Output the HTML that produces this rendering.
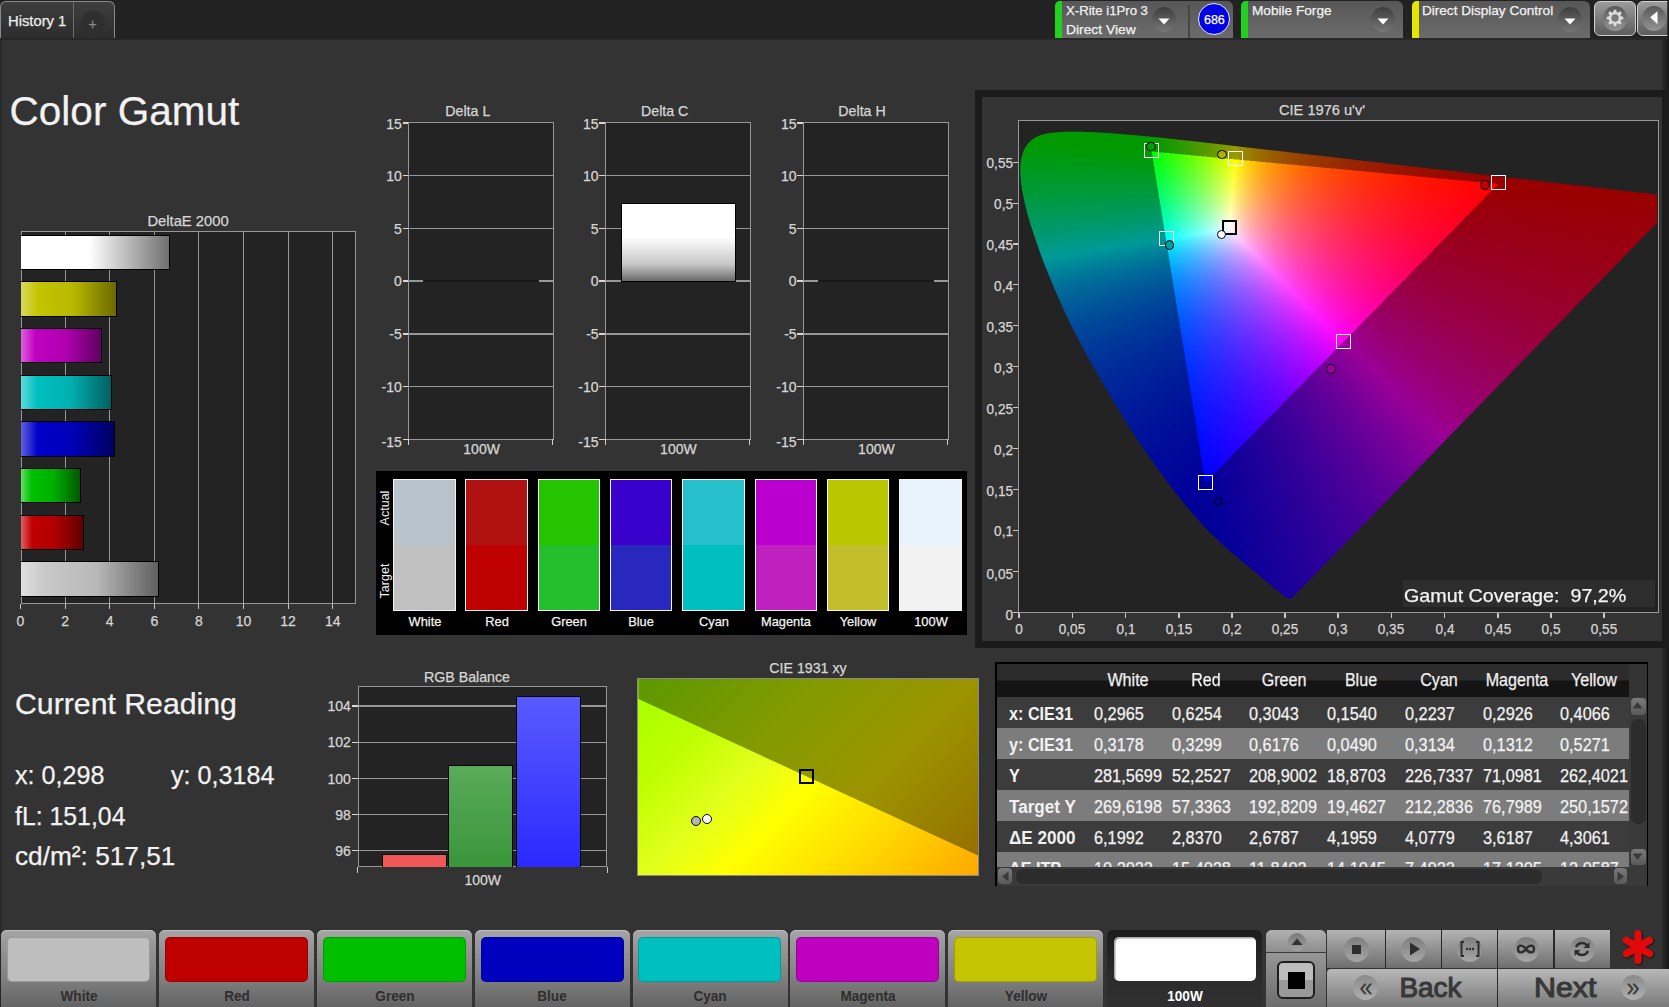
<!DOCTYPE html>
<html><head><meta charset="utf-8"><title>Color Gamut</title>
<style>
html,body{margin:0;padding:0;}
body{width:1669px;height:1007px;overflow:hidden;background:#333;position:relative;font-family:"Liberation Sans", sans-serif;}
.b{position:absolute;}
.t{position:absolute;white-space:nowrap;line-height:1;}
</style></head><body>
<div style="position:relative;left:0;top:0;width:1669px;height:1007px;overflow:hidden;background:#333;">
<div class="b" style="left:0.0px;top:0.0px;width:1669.0px;height:38.5px;background:#222;"></div>
<div class="b" style="left:0.0px;top:1.0px;width:115.0px;height:37.5px;background:linear-gradient(#3e3e3e,#2c2c2c);border:1px solid #8a8a8a;border-bottom:none;border-radius:6px 6px 0 0;box-sizing:border-box;"></div>
<div class="b" style="left:72.5px;top:1.5px;width:1.0px;height:37.0px;background:#6c6c6c;"></div>
<div class="t" style="left:7.8px;top:13.8px;font-size:14px;font-weight:normal;color:#ececec;transform:scaleX(1.055);transform-origin:0 0;-webkit-text-stroke:0.25px currentColor;">History 1</div>
<div class="b" style="left:81px;top:10.9px;width:23.5px;height:23.5px;border-radius:50%;background:radial-gradient(circle,#2e2e2e 0%,#2f2f2f 70%,#383838 100%);"></div>
<div class="t" style="left:92.7px;top:16.6px;font-size:14px;font-weight:normal;color:#8a8a8a;transform:translateX(-50%) scaleX(1.0);transform-origin:50% 0;-webkit-text-stroke:0.25px currentColor;">+</div>
<div class="b" style="left:1055.4px;top:1.0px;width:177.6px;height:37.5px;background:linear-gradient(#575757,#6c6c6c);border-radius:5px 6px 0 0;"></div>
<div class="b" style="left:1055.4px;top:1.0px;width:7.0px;height:37.5px;background:#22d022;border-radius:5px 0 0 0;"></div>
<div class="t" style="left:1066.0px;top:3.7px;font-size:13.3px;font-weight:normal;color:#f2f2f2;transform:scaleX(0.99);transform-origin:0 0;-webkit-text-stroke:0.25px currentColor;">X-Rite i1Pro 3</div>
<div class="t" style="left:1066.0px;top:22.5px;font-size:13.3px;font-weight:normal;color:#f2f2f2;transform:scaleX(1.04);transform-origin:0 0;-webkit-text-stroke:0.25px currentColor;">Direct View</div>
<div class="b" style="left:1152.4px;top:7.3px;width:24px;height:25px;border-radius:50%;background:linear-gradient(#3e3e3e,#767676);"></div>
<svg class="b" style="left:1158.4px;top:18.0px" width="12" height="8"><path d="M0.5 0.5 L11.5 0.5 L6 6.5 Z" fill="#fff"/></svg>
<div class="b" style="left:1188.0px;top:5.0px;width:1.5px;height:33.5px;background:#454545;"></div>
<div class="b" style="left:1197.6px;top:2.6px;width:30.6px;height:30.6px;border-radius:50%;background:#0000e6;border:1.6px solid #e8e8ff;"></div>
<div class="t" style="left:1214.4px;top:13.6px;font-size:12.5px;font-weight:normal;color:#fff;transform:translateX(-50%) scaleX(1.0);transform-origin:50% 0;-webkit-text-stroke:0.25px currentColor;">686</div>
<div class="b" style="left:1241.4px;top:1.0px;width:161.8px;height:37.5px;background:linear-gradient(#575757,#6c6c6c);border-radius:5px 6px 0 0;"></div>
<div class="b" style="left:1241.4px;top:1.0px;width:7.0px;height:37.5px;background:#22d022;border-radius:5px 0 0 0;"></div>
<div class="t" style="left:1252.0px;top:3.7px;font-size:13.3px;font-weight:normal;color:#f2f2f2;transform:scaleX(1.025);transform-origin:0 0;-webkit-text-stroke:0.25px currentColor;">Mobile Forge</div>
<div class="b" style="left:1371.1px;top:7.3px;width:24px;height:25px;border-radius:50%;background:linear-gradient(#3e3e3e,#767676);"></div>
<svg class="b" style="left:1377.1px;top:18.0px" width="12" height="8"><path d="M0.5 0.5 L11.5 0.5 L6 6.5 Z" fill="#fff"/></svg>
<div class="b" style="left:1411.5px;top:1.0px;width:178.3px;height:37.5px;background:linear-gradient(#575757,#6c6c6c);border-radius:5px 6px 0 0;"></div>
<div class="b" style="left:1411.5px;top:1.0px;width:7.0px;height:37.5px;background:#e6e600;border-radius:5px 0 0 0;"></div>
<div class="t" style="left:1422.0px;top:3.7px;font-size:13.3px;font-weight:normal;color:#f2f2f2;transform:scaleX(1.02);transform-origin:0 0;-webkit-text-stroke:0.25px currentColor;">Direct Display Control</div>
<div class="b" style="left:1558.3px;top:7.3px;width:24px;height:25px;border-radius:50%;background:linear-gradient(#3e3e3e,#767676);"></div>
<svg class="b" style="left:1564.3px;top:18.0px" width="12" height="8"><path d="M0.5 0.5 L11.5 0.5 L6 6.5 Z" fill="#fff"/></svg>
<div class="b" style="left:1594.2px;top:1.2px;width:42.0px;height:34.4px;background:linear-gradient(#9c9c9c,#5c5c5c);border:1.3px solid #d0d0d0;border-radius:6px;box-sizing:border-box;"></div>
<div class="b" style="left:1603.2px;top:6px;width:23.5px;height:25px;border-radius:50%;background:linear-gradient(#585858,#959595);"></div>
<svg class="b" style="left:1605px;top:8px" width="20" height="20" viewBox="-10 -10 20 20"><g fill="#dedede"><circle r="6.1"/><path d="M-1.9 -5.6 L-1.1 -8.3 L1.1 -8.3 L1.9 -5.6 Z" transform="rotate(0)"/><path d="M-1.9 -5.6 L-1.1 -8.3 L1.1 -8.3 L1.9 -5.6 Z" transform="rotate(45)"/><path d="M-1.9 -5.6 L-1.1 -8.3 L1.1 -8.3 L1.9 -5.6 Z" transform="rotate(90)"/><path d="M-1.9 -5.6 L-1.1 -8.3 L1.1 -8.3 L1.9 -5.6 Z" transform="rotate(135)"/><path d="M-1.9 -5.6 L-1.1 -8.3 L1.1 -8.3 L1.9 -5.6 Z" transform="rotate(180)"/><path d="M-1.9 -5.6 L-1.1 -8.3 L1.1 -8.3 L1.9 -5.6 Z" transform="rotate(225)"/><path d="M-1.9 -5.6 L-1.1 -8.3 L1.1 -8.3 L1.9 -5.6 Z" transform="rotate(270)"/><path d="M-1.9 -5.6 L-1.1 -8.3 L1.1 -8.3 L1.9 -5.6 Z" transform="rotate(315)"/></g><circle r="3.7" fill="#7a7a7a"/></svg>
<div class="b" style="left:1636.8px;top:1.2px;width:43.2px;height:34.4px;background:linear-gradient(#9c9c9c,#5c5c5c);border:1.3px solid #d0d0d0;border-radius:6px;box-sizing:border-box;"></div>
<div class="b" style="left:1642px;top:6px;width:23.5px;height:25px;border-radius:50%;background:linear-gradient(#585858,#959595);"></div>
<svg class="b" style="left:1649.5px;top:11px" width="8" height="14"><path d="M7.5 0.3 L7.5 13.2 L0.2 6.3 Z" fill="#fff"/></svg>
<div class="b" style="left:1666.5px;top:0.0px;width:2.5px;height:38.5px;background:linear-gradient(90deg,rgba(20,20,20,0.6),#141414);"></div>
<div class="b" style="left:0.0px;top:38.3px;width:1669.0px;height:1.3px;background:#272727;"></div>
<div class="b" style="left:0.0px;top:38.5px;width:1.8px;height:968.5px;background:#272727;"></div>
<div class="b" style="left:1662.0px;top:38.5px;width:7.0px;height:968.5px;background:linear-gradient(90deg,#2a2a2a,#161616);"></div>
<div class="t" style="left:9.6px;top:90.6px;font-size:40.5px;font-weight:normal;color:#f2f2f2;-webkit-text-stroke:0.25px currentColor;">Color Gamut</div>
<div class="t" style="left:188.1px;top:213.6px;font-size:14.2px;font-weight:normal;color:#d6d6d6;transform:translateX(-50%) scaleX(1.04);transform-origin:50% 0;-webkit-text-stroke:0.25px currentColor;">DeltaE 2000</div>
<div class="b" style="left:20.5px;top:230.6px;width:335.5px;height:373.2px;background:#232323;border:1.2px solid #979797;box-sizing:border-box;"></div>
<div class="b" style="left:19.9px;top:603.8px;width:1.2px;height:5.5px;background:#c8c8c8;"></div>
<div class="t" style="left:20.5px;top:613.6px;font-size:14px;font-weight:normal;color:#d6d6d6;transform:translateX(-50%) scaleX(1.0);transform-origin:50% 0;-webkit-text-stroke:0.25px currentColor;">0</div>
<div class="b" style="left:64.5px;top:230.6px;width:1.2px;height:373.2px;background:#979797;"></div>
<div class="b" style="left:64.5px;top:603.8px;width:1.2px;height:5.5px;background:#c8c8c8;"></div>
<div class="t" style="left:65.1px;top:613.6px;font-size:14px;font-weight:normal;color:#d6d6d6;transform:translateX(-50%) scaleX(1.0);transform-origin:50% 0;-webkit-text-stroke:0.25px currentColor;">2</div>
<div class="b" style="left:109.1px;top:230.6px;width:1.2px;height:373.2px;background:#979797;"></div>
<div class="b" style="left:109.1px;top:603.8px;width:1.2px;height:5.5px;background:#c8c8c8;"></div>
<div class="t" style="left:109.7px;top:613.6px;font-size:14px;font-weight:normal;color:#d6d6d6;transform:translateX(-50%) scaleX(1.0);transform-origin:50% 0;-webkit-text-stroke:0.25px currentColor;">4</div>
<div class="b" style="left:153.7px;top:230.6px;width:1.2px;height:373.2px;background:#979797;"></div>
<div class="b" style="left:153.7px;top:603.8px;width:1.2px;height:5.5px;background:#c8c8c8;"></div>
<div class="t" style="left:154.3px;top:613.6px;font-size:14px;font-weight:normal;color:#d6d6d6;transform:translateX(-50%) scaleX(1.0);transform-origin:50% 0;-webkit-text-stroke:0.25px currentColor;">6</div>
<div class="b" style="left:198.3px;top:230.6px;width:1.2px;height:373.2px;background:#979797;"></div>
<div class="b" style="left:198.3px;top:603.8px;width:1.2px;height:5.5px;background:#c8c8c8;"></div>
<div class="t" style="left:198.9px;top:613.6px;font-size:14px;font-weight:normal;color:#d6d6d6;transform:translateX(-50%) scaleX(1.0);transform-origin:50% 0;-webkit-text-stroke:0.25px currentColor;">8</div>
<div class="b" style="left:242.9px;top:230.6px;width:1.2px;height:373.2px;background:#979797;"></div>
<div class="b" style="left:242.9px;top:603.8px;width:1.2px;height:5.5px;background:#c8c8c8;"></div>
<div class="t" style="left:243.5px;top:613.6px;font-size:14px;font-weight:normal;color:#d6d6d6;transform:translateX(-50%) scaleX(1.0);transform-origin:50% 0;-webkit-text-stroke:0.25px currentColor;">10</div>
<div class="b" style="left:287.5px;top:230.6px;width:1.2px;height:373.2px;background:#979797;"></div>
<div class="b" style="left:287.5px;top:603.8px;width:1.2px;height:5.5px;background:#c8c8c8;"></div>
<div class="t" style="left:288.1px;top:613.6px;font-size:14px;font-weight:normal;color:#d6d6d6;transform:translateX(-50%) scaleX(1.0);transform-origin:50% 0;-webkit-text-stroke:0.25px currentColor;">12</div>
<div class="b" style="left:332.1px;top:230.6px;width:1.2px;height:373.2px;background:#979797;"></div>
<div class="b" style="left:332.1px;top:603.8px;width:1.2px;height:5.5px;background:#c8c8c8;"></div>
<div class="t" style="left:332.7px;top:613.6px;font-size:14px;font-weight:normal;color:#d6d6d6;transform:translateX(-50%) scaleX(1.0);transform-origin:50% 0;-webkit-text-stroke:0.25px currentColor;">14</div>
<div class="b" style="left:21.0px;top:234.5px;width:149.0px;height:35.6px;box-sizing:border-box;border:1.8px solid #000;border-left:none;background:linear-gradient(90deg,#ffffff 0%,#ffffff 18%,#ffffff 46%,#707070 100%);"></div>
<div class="b" style="left:21.0px;top:281.2px;width:96.0px;height:35.6px;box-sizing:border-box;border:1.8px solid #000;border-left:none;background:linear-gradient(90deg,#d8d860 0%,#c4c400 18%,#b8b800 55%,#6a6a00 100%);"></div>
<div class="b" style="left:21.0px;top:327.9px;width:80.7px;height:35.6px;box-sizing:border-box;border:1.8px solid #000;border-left:none;background:linear-gradient(90deg,#e060e0 0%,#c000c0 18%,#b000b0 55%,#600060 100%);"></div>
<div class="b" style="left:21.0px;top:374.6px;width:90.9px;height:35.6px;box-sizing:border-box;border:1.8px solid #000;border-left:none;background:linear-gradient(90deg,#60d8d8 0%,#00c0c0 18%,#00b0b0 55%,#006060 100%);"></div>
<div class="b" style="left:21.0px;top:421.3px;width:93.6px;height:35.6px;box-sizing:border-box;border:1.8px solid #000;border-left:none;background:linear-gradient(90deg,#6060e0 0%,#0000c8 18%,#0000b8 55%,#000060 100%);"></div>
<div class="b" style="left:21.0px;top:467.9px;width:59.7px;height:35.6px;box-sizing:border-box;border:1.8px solid #000;border-left:none;background:linear-gradient(90deg,#60e060 0%,#00c000 18%,#00b000 55%,#005800 100%);"></div>
<div class="b" style="left:21.0px;top:514.6px;width:63.3px;height:35.6px;box-sizing:border-box;border:1.8px solid #000;border-left:none;background:linear-gradient(90deg,#e06060 0%,#c00000 18%,#b00000 55%,#600000 100%);"></div>
<div class="b" style="left:21.0px;top:561.3px;width:138.2px;height:35.6px;box-sizing:border-box;border:1.8px solid #000;border-left:none;background:linear-gradient(90deg,#e0e0e0 0%,#c8c8c8 18%,#b8b8b8 55%,#606060 100%);"></div>
<div class="t" style="left:467.8px;top:104.3px;font-size:14.2px;font-weight:normal;color:#d6d6d6;transform:translateX(-50%) scaleX(1.0);transform-origin:50% 0;-webkit-text-stroke:0.25px currentColor;">Delta L</div>
<div class="b" style="left:408.1px;top:122.3px;width:145.9px;height:317.7px;background:#232323;border:1.2px solid #979797;box-sizing:border-box;"></div>
<div class="b" style="left:408.1px;top:174.9px;width:145.9px;height:1.4px;background:#979797;"></div>
<div class="b" style="left:408.1px;top:227.7px;width:145.9px;height:1.4px;background:#979797;"></div>
<div class="b" style="left:408.1px;top:280.4px;width:145.9px;height:1.4px;background:#979797;"></div>
<div class="b" style="left:408.1px;top:333.2px;width:145.9px;height:1.4px;background:#979797;"></div>
<div class="b" style="left:408.1px;top:385.9px;width:145.9px;height:1.4px;background:#979797;"></div>
<div class="b" style="left:402.6px;top:122.2px;width:5.5px;height:1.4px;background:#d8d8d8;"></div>
<div class="t" style="left:401.8px;top:116.8px;font-size:14px;font-weight:normal;color:#d6d6d6;transform:translateX(-100%) scaleX(1.0);transform-origin:100% 0;-webkit-text-stroke:0.25px currentColor;">15</div>
<div class="b" style="left:402.6px;top:174.9px;width:5.5px;height:1.4px;background:#d8d8d8;"></div>
<div class="t" style="left:401.8px;top:168.9px;font-size:14px;font-weight:normal;color:#d6d6d6;transform:translateX(-100%) scaleX(1.0);transform-origin:100% 0;-webkit-text-stroke:0.25px currentColor;">10</div>
<div class="b" style="left:402.6px;top:227.7px;width:5.5px;height:1.4px;background:#d8d8d8;"></div>
<div class="t" style="left:401.8px;top:221.7px;font-size:14px;font-weight:normal;color:#d6d6d6;transform:translateX(-100%) scaleX(1.0);transform-origin:100% 0;-webkit-text-stroke:0.25px currentColor;">5</div>
<div class="b" style="left:402.6px;top:280.4px;width:5.5px;height:1.4px;background:#d8d8d8;"></div>
<div class="t" style="left:401.8px;top:274.4px;font-size:14px;font-weight:normal;color:#d6d6d6;transform:translateX(-100%) scaleX(1.0);transform-origin:100% 0;-webkit-text-stroke:0.25px currentColor;">0</div>
<div class="b" style="left:402.6px;top:333.2px;width:5.5px;height:1.4px;background:#d8d8d8;"></div>
<div class="t" style="left:401.8px;top:327.2px;font-size:14px;font-weight:normal;color:#d6d6d6;transform:translateX(-100%) scaleX(1.0);transform-origin:100% 0;-webkit-text-stroke:0.25px currentColor;">-5</div>
<div class="b" style="left:402.6px;top:385.9px;width:5.5px;height:1.4px;background:#d8d8d8;"></div>
<div class="t" style="left:401.8px;top:379.9px;font-size:14px;font-weight:normal;color:#d6d6d6;transform:translateX(-100%) scaleX(1.0);transform-origin:100% 0;-webkit-text-stroke:0.25px currentColor;">-10</div>
<div class="b" style="left:402.6px;top:438.7px;width:5.5px;height:1.4px;background:#d8d8d8;"></div>
<div class="t" style="left:401.8px;top:434.7px;font-size:14px;font-weight:normal;color:#d6d6d6;transform:translateX(-100%) scaleX(1.0);transform-origin:100% 0;-webkit-text-stroke:0.25px currentColor;">-15</div>
<div class="b" style="left:408.2px;top:439.4px;width:1.2px;height:6.0px;background:#d0d0d0;"></div>
<div class="b" style="left:552.1px;top:439.4px;width:1.2px;height:6.0px;background:#d0d0d0;"></div>
<div class="t" style="left:481.6px;top:442.1px;font-size:14px;font-weight:normal;color:#d6d6d6;transform:translateX(-50%) scaleX(1.0);transform-origin:50% 0;-webkit-text-stroke:0.25px currentColor;">100W</div>
<div class="b" style="left:423.1px;top:280.2px;width:115.9px;height:1.6px;background:#1a1a1a;"></div>
<div class="t" style="left:664.7px;top:104.3px;font-size:14.2px;font-weight:normal;color:#d6d6d6;transform:translateX(-50%) scaleX(1.0);transform-origin:50% 0;-webkit-text-stroke:0.25px currentColor;">Delta C</div>
<div class="b" style="left:604.9px;top:122.3px;width:146.0px;height:317.7px;background:#232323;border:1.2px solid #979797;box-sizing:border-box;"></div>
<div class="b" style="left:604.9px;top:174.9px;width:146.0px;height:1.4px;background:#979797;"></div>
<div class="b" style="left:604.9px;top:227.7px;width:146.0px;height:1.4px;background:#979797;"></div>
<div class="b" style="left:604.9px;top:280.4px;width:146.0px;height:1.4px;background:#979797;"></div>
<div class="b" style="left:604.9px;top:333.2px;width:146.0px;height:1.4px;background:#979797;"></div>
<div class="b" style="left:604.9px;top:385.9px;width:146.0px;height:1.4px;background:#979797;"></div>
<div class="b" style="left:599.4px;top:122.2px;width:5.5px;height:1.4px;background:#d8d8d8;"></div>
<div class="t" style="left:598.6px;top:116.8px;font-size:14px;font-weight:normal;color:#d6d6d6;transform:translateX(-100%) scaleX(1.0);transform-origin:100% 0;-webkit-text-stroke:0.25px currentColor;">15</div>
<div class="b" style="left:599.4px;top:174.9px;width:5.5px;height:1.4px;background:#d8d8d8;"></div>
<div class="t" style="left:598.6px;top:168.9px;font-size:14px;font-weight:normal;color:#d6d6d6;transform:translateX(-100%) scaleX(1.0);transform-origin:100% 0;-webkit-text-stroke:0.25px currentColor;">10</div>
<div class="b" style="left:599.4px;top:227.7px;width:5.5px;height:1.4px;background:#d8d8d8;"></div>
<div class="t" style="left:598.6px;top:221.7px;font-size:14px;font-weight:normal;color:#d6d6d6;transform:translateX(-100%) scaleX(1.0);transform-origin:100% 0;-webkit-text-stroke:0.25px currentColor;">5</div>
<div class="b" style="left:599.4px;top:280.4px;width:5.5px;height:1.4px;background:#d8d8d8;"></div>
<div class="t" style="left:598.6px;top:274.4px;font-size:14px;font-weight:normal;color:#d6d6d6;transform:translateX(-100%) scaleX(1.0);transform-origin:100% 0;-webkit-text-stroke:0.25px currentColor;">0</div>
<div class="b" style="left:599.4px;top:333.2px;width:5.5px;height:1.4px;background:#d8d8d8;"></div>
<div class="t" style="left:598.6px;top:327.2px;font-size:14px;font-weight:normal;color:#d6d6d6;transform:translateX(-100%) scaleX(1.0);transform-origin:100% 0;-webkit-text-stroke:0.25px currentColor;">-5</div>
<div class="b" style="left:599.4px;top:385.9px;width:5.5px;height:1.4px;background:#d8d8d8;"></div>
<div class="t" style="left:598.6px;top:379.9px;font-size:14px;font-weight:normal;color:#d6d6d6;transform:translateX(-100%) scaleX(1.0);transform-origin:100% 0;-webkit-text-stroke:0.25px currentColor;">-10</div>
<div class="b" style="left:599.4px;top:438.7px;width:5.5px;height:1.4px;background:#d8d8d8;"></div>
<div class="t" style="left:598.6px;top:434.7px;font-size:14px;font-weight:normal;color:#d6d6d6;transform:translateX(-100%) scaleX(1.0);transform-origin:100% 0;-webkit-text-stroke:0.25px currentColor;">-15</div>
<div class="b" style="left:605.0px;top:439.4px;width:1.2px;height:6.0px;background:#d0d0d0;"></div>
<div class="b" style="left:749.0px;top:439.4px;width:1.2px;height:6.0px;background:#d0d0d0;"></div>
<div class="t" style="left:678.4px;top:442.1px;font-size:14px;font-weight:normal;color:#d6d6d6;transform:translateX(-50%) scaleX(1.0);transform-origin:50% 0;-webkit-text-stroke:0.25px currentColor;">100W</div>
<div class="b" style="left:620.9px;top:202.5px;width:115px;height:79.5px;box-sizing:border-box;border:1.8px solid #000;background:linear-gradient(#ffffff 0%,#ffffff 42%,#c8c8c8 78%,#6a6a6a 100%);"></div>
<div class="t" style="left:862.0px;top:104.3px;font-size:14.2px;font-weight:normal;color:#d6d6d6;transform:translateX(-50%) scaleX(1.0);transform-origin:50% 0;-webkit-text-stroke:0.25px currentColor;">Delta H</div>
<div class="b" style="left:802.9px;top:122.3px;width:146.0px;height:317.7px;background:#232323;border:1.2px solid #979797;box-sizing:border-box;"></div>
<div class="b" style="left:802.9px;top:174.9px;width:146.0px;height:1.4px;background:#979797;"></div>
<div class="b" style="left:802.9px;top:227.7px;width:146.0px;height:1.4px;background:#979797;"></div>
<div class="b" style="left:802.9px;top:280.4px;width:146.0px;height:1.4px;background:#979797;"></div>
<div class="b" style="left:802.9px;top:333.2px;width:146.0px;height:1.4px;background:#979797;"></div>
<div class="b" style="left:802.9px;top:385.9px;width:146.0px;height:1.4px;background:#979797;"></div>
<div class="b" style="left:797.4px;top:122.2px;width:5.5px;height:1.4px;background:#d8d8d8;"></div>
<div class="t" style="left:796.6px;top:116.8px;font-size:14px;font-weight:normal;color:#d6d6d6;transform:translateX(-100%) scaleX(1.0);transform-origin:100% 0;-webkit-text-stroke:0.25px currentColor;">15</div>
<div class="b" style="left:797.4px;top:174.9px;width:5.5px;height:1.4px;background:#d8d8d8;"></div>
<div class="t" style="left:796.6px;top:168.9px;font-size:14px;font-weight:normal;color:#d6d6d6;transform:translateX(-100%) scaleX(1.0);transform-origin:100% 0;-webkit-text-stroke:0.25px currentColor;">10</div>
<div class="b" style="left:797.4px;top:227.7px;width:5.5px;height:1.4px;background:#d8d8d8;"></div>
<div class="t" style="left:796.6px;top:221.7px;font-size:14px;font-weight:normal;color:#d6d6d6;transform:translateX(-100%) scaleX(1.0);transform-origin:100% 0;-webkit-text-stroke:0.25px currentColor;">5</div>
<div class="b" style="left:797.4px;top:280.4px;width:5.5px;height:1.4px;background:#d8d8d8;"></div>
<div class="t" style="left:796.6px;top:274.4px;font-size:14px;font-weight:normal;color:#d6d6d6;transform:translateX(-100%) scaleX(1.0);transform-origin:100% 0;-webkit-text-stroke:0.25px currentColor;">0</div>
<div class="b" style="left:797.4px;top:333.2px;width:5.5px;height:1.4px;background:#d8d8d8;"></div>
<div class="t" style="left:796.6px;top:327.2px;font-size:14px;font-weight:normal;color:#d6d6d6;transform:translateX(-100%) scaleX(1.0);transform-origin:100% 0;-webkit-text-stroke:0.25px currentColor;">-5</div>
<div class="b" style="left:797.4px;top:385.9px;width:5.5px;height:1.4px;background:#d8d8d8;"></div>
<div class="t" style="left:796.6px;top:379.9px;font-size:14px;font-weight:normal;color:#d6d6d6;transform:translateX(-100%) scaleX(1.0);transform-origin:100% 0;-webkit-text-stroke:0.25px currentColor;">-10</div>
<div class="b" style="left:797.4px;top:438.7px;width:5.5px;height:1.4px;background:#d8d8d8;"></div>
<div class="t" style="left:796.6px;top:434.7px;font-size:14px;font-weight:normal;color:#d6d6d6;transform:translateX(-100%) scaleX(1.0);transform-origin:100% 0;-webkit-text-stroke:0.25px currentColor;">-15</div>
<div class="b" style="left:803.0px;top:439.4px;width:1.2px;height:6.0px;background:#d0d0d0;"></div>
<div class="b" style="left:947.0px;top:439.4px;width:1.2px;height:6.0px;background:#d0d0d0;"></div>
<div class="t" style="left:876.4px;top:442.1px;font-size:14px;font-weight:normal;color:#d6d6d6;transform:translateX(-50%) scaleX(1.0);transform-origin:50% 0;-webkit-text-stroke:0.25px currentColor;">100W</div>
<div class="b" style="left:817.9px;top:280.2px;width:116.0px;height:1.6px;background:#1a1a1a;"></div>
<div class="b" style="left:375.9px;top:471.3px;width:591.6px;height:163.7px;background:#000;"></div>
<div class="t" style="left:385px;top:507.5px;font-size:12.5px;color:#f0f0f0;transform:translate(-50%,-50%) rotate(-90deg);line-height:1">Actual</div>
<div class="t" style="left:385px;top:581px;font-size:12.5px;color:#f0f0f0;transform:translate(-50%,-50%) rotate(-90deg);line-height:1">Target</div>
<div class="b" style="left:393.0px;top:479px;width:62.5px;height:132px;box-sizing:border-box;border:1.5px solid #f4f4f4;background:linear-gradient(#b9c3cb 50%,#c0c0c0 50%);"></div>
<div class="t" style="left:424.5px;top:614.5px;font-size:13.5px;font-weight:normal;color:#f4f4f4;transform:translateX(-50%) scaleX(0.95);transform-origin:50% 0;-webkit-text-stroke:0.25px currentColor;">White</div>
<div class="b" style="left:465.3px;top:479px;width:62.5px;height:132px;box-sizing:border-box;border:1.5px solid #f4f4f4;background:linear-gradient(#b01212 50%,#bf0000 50%);"></div>
<div class="t" style="left:496.8px;top:614.5px;font-size:13.5px;font-weight:normal;color:#f4f4f4;transform:translateX(-50%) scaleX(0.95);transform-origin:50% 0;-webkit-text-stroke:0.25px currentColor;">Red</div>
<div class="b" style="left:537.6px;top:479px;width:62.5px;height:132px;box-sizing:border-box;border:1.5px solid #f4f4f4;background:linear-gradient(#25c400 50%,#25bf2d 50%);"></div>
<div class="t" style="left:569.1px;top:614.5px;font-size:13.5px;font-weight:normal;color:#f4f4f4;transform:translateX(-50%) scaleX(0.95);transform-origin:50% 0;-webkit-text-stroke:0.25px currentColor;">Green</div>
<div class="b" style="left:609.9px;top:479px;width:62.5px;height:132px;box-sizing:border-box;border:1.5px solid #f4f4f4;background:linear-gradient(#3a00cc 50%,#2828be 50%);"></div>
<div class="t" style="left:641.4px;top:614.5px;font-size:13.5px;font-weight:normal;color:#f4f4f4;transform:translateX(-50%) scaleX(0.95);transform-origin:50% 0;-webkit-text-stroke:0.25px currentColor;">Blue</div>
<div class="b" style="left:682.2px;top:479px;width:62.5px;height:132px;box-sizing:border-box;border:1.5px solid #f4f4f4;background:linear-gradient(#25c0cb 50%,#00bfbf 50%);"></div>
<div class="t" style="left:713.7px;top:614.5px;font-size:13.5px;font-weight:normal;color:#f4f4f4;transform:translateX(-50%) scaleX(0.95);transform-origin:50% 0;-webkit-text-stroke:0.25px currentColor;">Cyan</div>
<div class="b" style="left:754.5px;top:479px;width:62.5px;height:132px;box-sizing:border-box;border:1.5px solid #f4f4f4;background:linear-gradient(#ba00cf 50%,#bf21bf 50%);"></div>
<div class="t" style="left:786.0px;top:614.5px;font-size:13.5px;font-weight:normal;color:#f4f4f4;transform:translateX(-50%) scaleX(0.95);transform-origin:50% 0;-webkit-text-stroke:0.25px currentColor;">Magenta</div>
<div class="b" style="left:826.8px;top:479px;width:62.5px;height:132px;box-sizing:border-box;border:1.5px solid #f4f4f4;background:linear-gradient(#bac700 50%,#c2bd2a 50%);"></div>
<div class="t" style="left:858.3px;top:614.5px;font-size:13.5px;font-weight:normal;color:#f4f4f4;transform:translateX(-50%) scaleX(0.95);transform-origin:50% 0;-webkit-text-stroke:0.25px currentColor;">Yellow</div>
<div class="b" style="left:899.1px;top:479px;width:62.5px;height:132px;box-sizing:border-box;border:1.5px solid #f4f4f4;background:linear-gradient(#e8f2fc 50%,#f2f2f2 50%);"></div>
<div class="t" style="left:930.6px;top:614.5px;font-size:13.5px;font-weight:normal;color:#f4f4f4;transform:translateX(-50%) scaleX(0.95);transform-origin:50% 0;-webkit-text-stroke:0.25px currentColor;">100W</div>
<div class="b" style="left:975.0px;top:90.0px;width:694.0px;height:558.0px;background:#1b1b1b;"></div>
<div class="b" style="left:982.0px;top:97.0px;width:680.0px;height:544.4px;background:#333;"></div>
<div class="t" style="left:1322.0px;top:103.4px;font-size:14.2px;font-weight:normal;color:#d6d6d6;transform:translateX(-50%) scaleX(1.03);transform-origin:50% 0;-webkit-text-stroke:0.25px currentColor;">CIE 1976 u'v'</div>
<div class="b" style="left:1018.4px;top:120.4px;width:640.8px;height:492.4px;background:#232323;border:1.2px solid #979797;box-sizing:border-box;"></div>
<div id="ciefb" class="b" style="left:1019.4px;top:121.4px;width:638px;height:490px;"><div class="b" style="left:0;top:0;width:100%;height:100%;background:conic-gradient(from 0deg at 210.2px 107.6px,rgb(0,153,0) -45.1deg,rgb(153,153,0) 5.3deg,rgb(153,0,0) 80.6deg,rgb(153,0,153) 134.9deg,rgb(0,0,153) 185.4deg,rgb(0,153,153) 260.6deg,rgb(0,153,0) 314.9deg,rgb(153,153,0) 365.3deg);clip-path:polygon(272.9px 477.2px,272.7px 477.2px,272.5px 477.5px,272.1px 477.5px,271.7px 477.8px,271.2px 477.8px,270.5px 477.8px,269.6px 477.8px,268.0px 477.0px,265.3px 475.1px,261.5px 472.3px,256.2px 467.9px,249.4px 462.2px,240.8px 455.1px,229.6px 445.8px,216.1px 434.5px,199.4px 419.5px,179.5px 399.2px,153.0px 367.3px,121.8px 323.6px,87.9px 269.2px,55.2px 210.4px,29.7px 154.0px,12.4px 106.4px,3.5px 71.0px,1.3px 46.4px,4.7px 29.5px,12.9px 18.7px,24.4px 13.2px,38.1px 11.2px,53.0px 10.7px,68.2px 10.9px,84.1px 11.6px,101.1px 12.9px,119.7px 14.6px,140.0px 16.6px,162.6px 19.0px,187.6px 21.8px,215.3px 24.9px,245.6px 28.4px,278.8px 32.2px,314.6px 36.4px,352.4px 40.7px,391.2px 45.2px,428.9px 49.5px,465.6px 53.7px,498.8px 57.5px,528.1px 60.9px,553.1px 63.8px,574.0px 66.2px,591.6px 68.2px,606.9px 70.0px,619.9px 71.5px,630.3px 72.6px,638.4px 73.6px,644.7px 74.3px,649.5px 74.9px,652.6px 75.2px,655.1px 75.5px,657.1px 75.7px,659.1px 76.0px,660.8px 76.2px,661.9px 76.3px,662.5px 76.4px,662.8px 76.4px);"></div><div class="b" style="left:0;top:0;width:100%;height:100%;background:radial-gradient(circle at 210.2px 107.6px,rgba(255,255,255,1) 0px,rgba(255,255,255,0.6) 25px,rgba(255,255,255,0) 110px),conic-gradient(from 0deg at 210.2px 107.6px,rgb(0,255,0) -45.1deg,rgb(255,255,0) 5.3deg,rgb(255,0,0) 80.6deg,rgb(255,0,255) 134.9deg,rgb(0,0,255) 185.4deg,rgb(0,255,255) 260.6deg,rgb(0,255,0) 314.9deg,rgb(255,255,0) 365.3deg);clip-path:polygon(479.1px 63.0px,132.7px 30.6px,186.4px 361.6px);"></div></div>
<canvas id="cie" class="b" style="left:1019.4px;top:121.4px" width="638" height="490"></canvas>
<div class="b" style="left:1013.4px;top:611.6px;width:5.0px;height:1.2px;background:#c8c8c8;"></div>
<div class="t" style="left:1012.9px;top:608.2px;font-size:14px;font-weight:normal;color:#d6d6d6;transform:translateX(-100%) scaleX(0.97);transform-origin:100% 0;-webkit-text-stroke:0.25px currentColor;">0</div>
<div class="b" style="left:1013.4px;top:570.7px;width:5.0px;height:1.2px;background:#c8c8c8;"></div>
<div class="t" style="left:1012.9px;top:567.3px;font-size:14px;font-weight:normal;color:#d6d6d6;transform:translateX(-100%) scaleX(0.97);transform-origin:100% 0;-webkit-text-stroke:0.25px currentColor;">0,05</div>
<div class="b" style="left:1013.4px;top:529.8px;width:5.0px;height:1.2px;background:#c8c8c8;"></div>
<div class="t" style="left:1012.9px;top:524.4px;font-size:14px;font-weight:normal;color:#d6d6d6;transform:translateX(-100%) scaleX(0.97);transform-origin:100% 0;-webkit-text-stroke:0.25px currentColor;">0,1</div>
<div class="b" style="left:1013.4px;top:488.9px;width:5.0px;height:1.2px;background:#c8c8c8;"></div>
<div class="t" style="left:1012.9px;top:483.5px;font-size:14px;font-weight:normal;color:#d6d6d6;transform:translateX(-100%) scaleX(0.97);transform-origin:100% 0;-webkit-text-stroke:0.25px currentColor;">0,15</div>
<div class="b" style="left:1013.4px;top:448.0px;width:5.0px;height:1.2px;background:#c8c8c8;"></div>
<div class="t" style="left:1012.9px;top:442.6px;font-size:14px;font-weight:normal;color:#d6d6d6;transform:translateX(-100%) scaleX(0.97);transform-origin:100% 0;-webkit-text-stroke:0.25px currentColor;">0,2</div>
<div class="b" style="left:1013.4px;top:407.1px;width:5.0px;height:1.2px;background:#c8c8c8;"></div>
<div class="t" style="left:1012.9px;top:401.7px;font-size:14px;font-weight:normal;color:#d6d6d6;transform:translateX(-100%) scaleX(0.97);transform-origin:100% 0;-webkit-text-stroke:0.25px currentColor;">0,25</div>
<div class="b" style="left:1013.4px;top:366.1px;width:5.0px;height:1.2px;background:#c8c8c8;"></div>
<div class="t" style="left:1012.9px;top:360.7px;font-size:14px;font-weight:normal;color:#d6d6d6;transform:translateX(-100%) scaleX(0.97);transform-origin:100% 0;-webkit-text-stroke:0.25px currentColor;">0,3</div>
<div class="b" style="left:1013.4px;top:325.2px;width:5.0px;height:1.2px;background:#c8c8c8;"></div>
<div class="t" style="left:1012.9px;top:319.8px;font-size:14px;font-weight:normal;color:#d6d6d6;transform:translateX(-100%) scaleX(0.97);transform-origin:100% 0;-webkit-text-stroke:0.25px currentColor;">0,35</div>
<div class="b" style="left:1013.4px;top:284.3px;width:5.0px;height:1.2px;background:#c8c8c8;"></div>
<div class="t" style="left:1012.9px;top:278.9px;font-size:14px;font-weight:normal;color:#d6d6d6;transform:translateX(-100%) scaleX(0.97);transform-origin:100% 0;-webkit-text-stroke:0.25px currentColor;">0,4</div>
<div class="b" style="left:1013.4px;top:243.4px;width:5.0px;height:1.2px;background:#c8c8c8;"></div>
<div class="t" style="left:1012.9px;top:238.0px;font-size:14px;font-weight:normal;color:#d6d6d6;transform:translateX(-100%) scaleX(0.97);transform-origin:100% 0;-webkit-text-stroke:0.25px currentColor;">0,45</div>
<div class="b" style="left:1013.4px;top:202.5px;width:5.0px;height:1.2px;background:#c8c8c8;"></div>
<div class="t" style="left:1012.9px;top:197.1px;font-size:14px;font-weight:normal;color:#d6d6d6;transform:translateX(-100%) scaleX(0.97);transform-origin:100% 0;-webkit-text-stroke:0.25px currentColor;">0,5</div>
<div class="b" style="left:1013.4px;top:161.6px;width:5.0px;height:1.2px;background:#c8c8c8;"></div>
<div class="t" style="left:1012.9px;top:156.2px;font-size:14px;font-weight:normal;color:#d6d6d6;transform:translateX(-100%) scaleX(0.97);transform-origin:100% 0;-webkit-text-stroke:0.25px currentColor;">0,55</div>
<div class="b" style="left:1018.3px;top:612.8px;width:1.8px;height:5.5px;background:#c8c8c8;"></div>
<div class="t" style="left:1019.2px;top:622.4px;font-size:14px;font-weight:normal;color:#d6d6d6;transform:translateX(-50%) scaleX(0.97);transform-origin:50% 0;-webkit-text-stroke:0.25px currentColor;">0</div>
<div class="b" style="left:1071.5px;top:612.8px;width:1.8px;height:5.5px;background:#c8c8c8;"></div>
<div class="t" style="left:1072.4px;top:622.4px;font-size:14px;font-weight:normal;color:#d6d6d6;transform:translateX(-50%) scaleX(0.97);transform-origin:50% 0;-webkit-text-stroke:0.25px currentColor;">0,05</div>
<div class="b" style="left:1124.6px;top:612.8px;width:1.8px;height:5.5px;background:#c8c8c8;"></div>
<div class="t" style="left:1125.5px;top:622.4px;font-size:14px;font-weight:normal;color:#d6d6d6;transform:translateX(-50%) scaleX(0.97);transform-origin:50% 0;-webkit-text-stroke:0.25px currentColor;">0,1</div>
<div class="b" style="left:1177.8px;top:612.8px;width:1.8px;height:5.5px;background:#c8c8c8;"></div>
<div class="t" style="left:1178.7px;top:622.4px;font-size:14px;font-weight:normal;color:#d6d6d6;transform:translateX(-50%) scaleX(0.97);transform-origin:50% 0;-webkit-text-stroke:0.25px currentColor;">0,15</div>
<div class="b" style="left:1231.0px;top:612.8px;width:1.8px;height:5.5px;background:#c8c8c8;"></div>
<div class="t" style="left:1231.9px;top:622.4px;font-size:14px;font-weight:normal;color:#d6d6d6;transform:translateX(-50%) scaleX(0.97);transform-origin:50% 0;-webkit-text-stroke:0.25px currentColor;">0,2</div>
<div class="b" style="left:1284.2px;top:612.8px;width:1.8px;height:5.5px;background:#c8c8c8;"></div>
<div class="t" style="left:1285.1px;top:622.4px;font-size:14px;font-weight:normal;color:#d6d6d6;transform:translateX(-50%) scaleX(0.97);transform-origin:50% 0;-webkit-text-stroke:0.25px currentColor;">0,25</div>
<div class="b" style="left:1337.3px;top:612.8px;width:1.8px;height:5.5px;background:#c8c8c8;"></div>
<div class="t" style="left:1338.2px;top:622.4px;font-size:14px;font-weight:normal;color:#d6d6d6;transform:translateX(-50%) scaleX(0.97);transform-origin:50% 0;-webkit-text-stroke:0.25px currentColor;">0,3</div>
<div class="b" style="left:1390.5px;top:612.8px;width:1.8px;height:5.5px;background:#c8c8c8;"></div>
<div class="t" style="left:1391.4px;top:622.4px;font-size:14px;font-weight:normal;color:#d6d6d6;transform:translateX(-50%) scaleX(0.97);transform-origin:50% 0;-webkit-text-stroke:0.25px currentColor;">0,35</div>
<div class="b" style="left:1443.7px;top:612.8px;width:1.8px;height:5.5px;background:#c8c8c8;"></div>
<div class="t" style="left:1444.6px;top:622.4px;font-size:14px;font-weight:normal;color:#d6d6d6;transform:translateX(-50%) scaleX(0.97);transform-origin:50% 0;-webkit-text-stroke:0.25px currentColor;">0,4</div>
<div class="b" style="left:1496.9px;top:612.8px;width:1.8px;height:5.5px;background:#c8c8c8;"></div>
<div class="t" style="left:1497.8px;top:622.4px;font-size:14px;font-weight:normal;color:#d6d6d6;transform:translateX(-50%) scaleX(0.97);transform-origin:50% 0;-webkit-text-stroke:0.25px currentColor;">0,45</div>
<div class="b" style="left:1550.0px;top:612.8px;width:1.8px;height:5.5px;background:#c8c8c8;"></div>
<div class="t" style="left:1551.0px;top:622.4px;font-size:14px;font-weight:normal;color:#d6d6d6;transform:translateX(-50%) scaleX(0.97);transform-origin:50% 0;-webkit-text-stroke:0.25px currentColor;">0,5</div>
<div class="b" style="left:1603.2px;top:612.8px;width:1.8px;height:5.5px;background:#c8c8c8;"></div>
<div class="t" style="left:1604.1px;top:622.4px;font-size:14px;font-weight:normal;color:#d6d6d6;transform:translateX(-50%) scaleX(0.97);transform-origin:50% 0;-webkit-text-stroke:0.25px currentColor;">0,55</div>
<div class="b" style="left:1403.0px;top:580.3px;width:252.3px;height:26.8px;background:#2d2d2d;"></div>
<div class="t" style="left:1404.0px;top:585.5px;font-size:19px;font-weight:normal;color:#f4f4f4;transform:scaleX(1.037);transform-origin:0 0;-webkit-text-stroke:0.25px currentColor;">Gamut Coverage:&nbsp; 97,2%</div>
<div class="b" style="left:1490.8px;top:175.2px;width:15px;height:15px;box-sizing:border-box;border:1.8px solid #fff;"></div>
<div class="b" style="left:1144.3px;top:142.7px;width:15px;height:15px;box-sizing:border-box;border:1.8px solid #fff;"></div>
<div class="b" style="left:1198.0px;top:474.9px;width:15px;height:15px;box-sizing:border-box;border:1.8px solid #fff;"></div>
<div class="b" style="left:1158.5px;top:230.6px;width:15px;height:15px;box-sizing:border-box;border:1.8px solid #fff;"></div>
<div class="b" style="left:1335.8px;top:333.8px;width:15px;height:15px;box-sizing:border-box;border:1.8px solid #fff;"></div>
<div class="b" style="left:1228.3px;top:150.6px;width:15px;height:15px;box-sizing:border-box;border:1.8px solid #fff;"></div>
<div class="b" style="left:1222.0px;top:220.2px;width:14.6px;height:14.6px;box-sizing:border-box;border:2.3px solid #000;"></div>
<div class="b" style="left:1480.3px;top:180.1px;width:9.6px;height:9.6px;box-sizing:border-box;border:1.5px solid #000;border-radius:50%;background:#c00000;"></div>
<div class="b" style="left:1146.1px;top:141.7px;width:9.6px;height:9.6px;box-sizing:border-box;border:1.5px solid #000;border-radius:50%;background:#00a000;"></div>
<div class="b" style="left:1213.8px;top:496.9px;width:9.6px;height:9.6px;box-sizing:border-box;border:1.5px solid #000;border-radius:50%;background:#0000a0;"></div>
<div class="b" style="left:1164.8px;top:240.4px;width:9.6px;height:9.6px;box-sizing:border-box;border:1.5px solid #000;border-radius:50%;background:#00a0a0;"></div>
<div class="b" style="left:1326.2px;top:364.2px;width:9.6px;height:9.6px;box-sizing:border-box;border:1.5px solid #000;border-radius:50%;background:#a000a0;"></div>
<div class="b" style="left:1217.3px;top:149.6px;width:9.6px;height:9.6px;box-sizing:border-box;border:1.5px solid #000;border-radius:50%;background:#b0b000;"></div>
<div class="b" style="left:1216.9px;top:229.7px;width:9.6px;height:9.6px;box-sizing:border-box;border:1.5px solid #000;border-radius:50%;background:#ffffff;"></div>
<div class="t" style="left:14.5px;top:690.4px;font-size:29px;font-weight:normal;color:#f2f2f2;transform:scaleX(1.043);transform-origin:0 0;-webkit-text-stroke:0.25px currentColor;">Current Reading</div>
<div class="t" style="left:15.4px;top:761.5px;font-size:26.5px;font-weight:normal;color:#f2f2f2;transform:scaleX(0.948);transform-origin:0 0;-webkit-text-stroke:0.25px currentColor;">x: 0,298</div>
<div class="t" style="left:171.3px;top:761.5px;font-size:26.5px;font-weight:normal;color:#f2f2f2;transform:scaleX(0.948);transform-origin:0 0;-webkit-text-stroke:0.25px currentColor;">y: 0,3184</div>
<div class="t" style="left:15.4px;top:802.7px;font-size:26.5px;font-weight:normal;color:#f2f2f2;transform:scaleX(0.937);transform-origin:0 0;-webkit-text-stroke:0.25px currentColor;">fL: 151,04</div>
<div class="t" style="left:15.4px;top:842.8px;font-size:26.5px;font-weight:normal;color:#f2f2f2;transform:scaleX(0.99);transform-origin:0 0;-webkit-text-stroke:0.25px currentColor;">cd/m²: 517,51</div>
<div class="t" style="left:467.0px;top:669.9px;font-size:14.2px;font-weight:normal;color:#d6d6d6;transform:translateX(-50%) scaleX(1.0);transform-origin:50% 0;-webkit-text-stroke:0.25px currentColor;">RGB Balance</div>
<div class="b" style="left:357.5px;top:686.2px;width:249.9px;height:180.5px;background:#232323;border:1.2px solid #979797;box-sizing:border-box;"></div>
<div class="b" style="left:357.5px;top:705.4px;width:249.9px;height:1.2px;background:#979797;"></div>
<div class="b" style="left:352.0px;top:705.3px;width:5.5px;height:1.4px;background:#d8d8d8;"></div>
<div class="t" style="left:350.9px;top:699.1px;font-size:14px;font-weight:normal;color:#d6d6d6;transform:translateX(-100%) scaleX(1.0);transform-origin:100% 0;-webkit-text-stroke:0.25px currentColor;">104</div>
<div class="b" style="left:357.5px;top:741.6px;width:249.9px;height:1.2px;background:#979797;"></div>
<div class="b" style="left:352.0px;top:741.5px;width:5.5px;height:1.4px;background:#d8d8d8;"></div>
<div class="t" style="left:350.9px;top:735.3px;font-size:14px;font-weight:normal;color:#d6d6d6;transform:translateX(-100%) scaleX(1.0);transform-origin:100% 0;-webkit-text-stroke:0.25px currentColor;">102</div>
<div class="b" style="left:357.5px;top:777.8px;width:249.9px;height:1.2px;background:#979797;"></div>
<div class="b" style="left:352.0px;top:777.7px;width:5.5px;height:1.4px;background:#d8d8d8;"></div>
<div class="t" style="left:350.9px;top:771.5px;font-size:14px;font-weight:normal;color:#d6d6d6;transform:translateX(-100%) scaleX(1.0);transform-origin:100% 0;-webkit-text-stroke:0.25px currentColor;">100</div>
<div class="b" style="left:357.5px;top:814.0px;width:249.9px;height:1.2px;background:#979797;"></div>
<div class="b" style="left:352.0px;top:813.9px;width:5.5px;height:1.4px;background:#d8d8d8;"></div>
<div class="t" style="left:350.9px;top:807.7px;font-size:14px;font-weight:normal;color:#d6d6d6;transform:translateX(-100%) scaleX(1.0);transform-origin:100% 0;-webkit-text-stroke:0.25px currentColor;">98</div>
<div class="b" style="left:357.5px;top:850.2px;width:249.9px;height:1.2px;background:#979797;"></div>
<div class="b" style="left:352.0px;top:850.1px;width:5.5px;height:1.4px;background:#d8d8d8;"></div>
<div class="t" style="left:350.9px;top:843.9px;font-size:14px;font-weight:normal;color:#d6d6d6;transform:translateX(-100%) scaleX(1.0);transform-origin:100% 0;-webkit-text-stroke:0.25px currentColor;">96</div>
<div class="b" style="left:356.9px;top:866.7px;width:1.2px;height:6.0px;background:#c8c8c8;"></div>
<div class="b" style="left:606.8px;top:866.7px;width:1.2px;height:6.0px;background:#c8c8c8;"></div>
<div class="t" style="left:482.8px;top:872.6px;font-size:14px;font-weight:normal;color:#d6d6d6;transform:translateX(-50%) scaleX(1.0);transform-origin:50% 0;-webkit-text-stroke:0.25px currentColor;">100W</div>
<div class="b" style="left:381.8px;top:853.8px;width:65.7px;height:13px;box-sizing:border-box;border:1.5px solid #000;border-bottom:none;background:#f05858;"></div>
<div class="b" style="left:448.2px;top:764.5px;width:65px;height:102.2px;box-sizing:border-box;border:1.5px solid #000;border-bottom:none;background:linear-gradient(#5aaa5a,#3a963a);"></div>
<div class="b" style="left:515.6px;top:696.4px;width:65px;height:170.3px;box-sizing:border-box;border:1.5px solid #000;border-bottom:none;background:linear-gradient(#5a5aff,#2a2aff);"></div>
<div class="b" style="left:637.4px;top:678.1px;width:341.6px;height:198.4px;background:#888;"></div>
<div class="t" style="left:808.0px;top:660.9px;font-size:14.2px;font-weight:normal;color:#d6d6d6;transform:translateX(-50%) scaleX(1.0);transform-origin:50% 0;-webkit-text-stroke:0.25px currentColor;">CIE 1931 xy</div>
<div class="b" style="left:638.4px;top:679.1px;width:339.6px;height:196.4px;background:linear-gradient(135deg,#a4ff00 0%,#bcff00 20%,#e2ff1c 38%,#ffff00 52%,#ffd800 75%,#ffa800 100%);"></div>
<div class="b" style="left:638.4px;top:679.1px;width:339.6px;height:196.4px;background:linear-gradient(135deg,#5c9800 0%,#849a00 35%,#9c9400 63%,#946c00 100%);clip-path:polygon(0 0,339.6px 0,339.6px 176.4px,0 19.8px);"></div>
<div class="b" style="left:799px;top:768.7px;width:15.2px;height:15.2px;box-sizing:border-box;border:2.2px solid #000;"></div>
<div class="b" style="left:690.8px;top:816.2px;width:10px;height:10px;box-sizing:border-box;border:1.3px solid #000;border-radius:50%;background:#b4b4b4;"></div>
<div class="b" style="left:702px;top:813.5px;width:10px;height:10px;box-sizing:border-box;border:1.3px solid #000;border-radius:50%;background:#fff;"></div>
<div class="b" style="left:995.2px;top:662.2px;width:653.0px;height:223.8px;background:#000;"></div>
<div class="b" style="left:996.7px;top:664.0px;width:650.0px;height:222.0px;background:#333;"></div>
<div class="b" style="left:996.7px;top:664.0px;width:632.7px;height:32.7px;background:linear-gradient(#2c2c2c 0%,#2c2c2c 48%,#141414 52%,#141414 100%);"></div>
<div class="t" style="left:1128.2px;top:671.8px;font-size:17.5px;font-weight:normal;color:#f0f0f0;transform:translateX(-50%) scaleX(0.92);transform-origin:50% 0;-webkit-text-stroke:0.25px currentColor;">White</div>
<div class="t" style="left:1206.0px;top:671.8px;font-size:17.5px;font-weight:normal;color:#f0f0f0;transform:translateX(-50%) scaleX(0.92);transform-origin:50% 0;-webkit-text-stroke:0.25px currentColor;">Red</div>
<div class="t" style="left:1283.5px;top:671.8px;font-size:17.5px;font-weight:normal;color:#f0f0f0;transform:translateX(-50%) scaleX(0.92);transform-origin:50% 0;-webkit-text-stroke:0.25px currentColor;">Green</div>
<div class="t" style="left:1361.0px;top:671.8px;font-size:17.5px;font-weight:normal;color:#f0f0f0;transform:translateX(-50%) scaleX(0.92);transform-origin:50% 0;-webkit-text-stroke:0.25px currentColor;">Blue</div>
<div class="t" style="left:1439.2px;top:671.8px;font-size:17.5px;font-weight:normal;color:#f0f0f0;transform:translateX(-50%) scaleX(0.92);transform-origin:50% 0;-webkit-text-stroke:0.25px currentColor;">Cyan</div>
<div class="t" style="left:1516.9px;top:671.8px;font-size:17.5px;font-weight:normal;color:#f0f0f0;transform:translateX(-50%) scaleX(0.92);transform-origin:50% 0;-webkit-text-stroke:0.25px currentColor;">Magenta</div>
<div class="t" style="left:1594.1px;top:671.8px;font-size:17.5px;font-weight:normal;color:#f0f0f0;transform:translateX(-50%) scaleX(0.92);transform-origin:50% 0;-webkit-text-stroke:0.25px currentColor;">Yellow</div>
<div class="b" style="left:996.7px;top:696.7px;width:632.7px;height:169.9px;overflow:hidden;">
<div class="b" style="left:0;top:0.0px;width:632.7px;height:31.05px;background:#3c3c3c;"></div>
<div class="t" style="left:12.3px;top:8.1px;font-size:18px;font-weight:bold;color:#f2f2f2;transform:scaleX(0.9);transform-origin:0 0;">x: CIE31</div>
<div class="t" style="left:96.9px;top:8.1px;font-size:18px;font-weight:normal;color:#f2f2f2;transform:scaleX(0.905);transform-origin:0 0;-webkit-text-stroke:0.25px currentColor;">0,2965</div>
<div class="t" style="left:174.9px;top:8.1px;font-size:18px;font-weight:normal;color:#f2f2f2;transform:scaleX(0.905);transform-origin:0 0;-webkit-text-stroke:0.25px currentColor;">0,6254</div>
<div class="t" style="left:252.5px;top:8.1px;font-size:18px;font-weight:normal;color:#f2f2f2;transform:scaleX(0.905);transform-origin:0 0;-webkit-text-stroke:0.25px currentColor;">0,3043</div>
<div class="t" style="left:330.0px;top:8.1px;font-size:18px;font-weight:normal;color:#f2f2f2;transform:scaleX(0.905);transform-origin:0 0;-webkit-text-stroke:0.25px currentColor;">0,1540</div>
<div class="t" style="left:407.9px;top:8.1px;font-size:18px;font-weight:normal;color:#f2f2f2;transform:scaleX(0.905);transform-origin:0 0;-webkit-text-stroke:0.25px currentColor;">0,2237</div>
<div class="t" style="left:485.9px;top:8.1px;font-size:18px;font-weight:normal;color:#f2f2f2;transform:scaleX(0.905);transform-origin:0 0;-webkit-text-stroke:0.25px currentColor;">0,2926</div>
<div class="t" style="left:563.6px;top:8.1px;font-size:18px;font-weight:normal;color:#f2f2f2;transform:scaleX(0.905);transform-origin:0 0;-webkit-text-stroke:0.25px currentColor;">0,4066</div>
<div class="b" style="left:0;top:31.0px;width:632.7px;height:31.05px;background:#7c7c7c;"></div>
<div class="t" style="left:12.3px;top:39.1px;font-size:18px;font-weight:bold;color:#f2f2f2;transform:scaleX(0.9);transform-origin:0 0;">y: CIE31</div>
<div class="t" style="left:96.9px;top:39.1px;font-size:18px;font-weight:normal;color:#f2f2f2;transform:scaleX(0.905);transform-origin:0 0;-webkit-text-stroke:0.25px currentColor;">0,3178</div>
<div class="t" style="left:174.9px;top:39.1px;font-size:18px;font-weight:normal;color:#f2f2f2;transform:scaleX(0.905);transform-origin:0 0;-webkit-text-stroke:0.25px currentColor;">0,3299</div>
<div class="t" style="left:252.5px;top:39.1px;font-size:18px;font-weight:normal;color:#f2f2f2;transform:scaleX(0.905);transform-origin:0 0;-webkit-text-stroke:0.25px currentColor;">0,6176</div>
<div class="t" style="left:330.0px;top:39.1px;font-size:18px;font-weight:normal;color:#f2f2f2;transform:scaleX(0.905);transform-origin:0 0;-webkit-text-stroke:0.25px currentColor;">0,0490</div>
<div class="t" style="left:407.9px;top:39.1px;font-size:18px;font-weight:normal;color:#f2f2f2;transform:scaleX(0.905);transform-origin:0 0;-webkit-text-stroke:0.25px currentColor;">0,3134</div>
<div class="t" style="left:485.9px;top:39.1px;font-size:18px;font-weight:normal;color:#f2f2f2;transform:scaleX(0.905);transform-origin:0 0;-webkit-text-stroke:0.25px currentColor;">0,1312</div>
<div class="t" style="left:563.6px;top:39.1px;font-size:18px;font-weight:normal;color:#f2f2f2;transform:scaleX(0.905);transform-origin:0 0;-webkit-text-stroke:0.25px currentColor;">0,5271</div>
<div class="b" style="left:0;top:62.1px;width:632.7px;height:31.05px;background:#3c3c3c;"></div>
<div class="t" style="left:12.3px;top:70.2px;font-size:18px;font-weight:bold;color:#f2f2f2;transform:scaleX(0.9);transform-origin:0 0;">Y</div>
<div class="t" style="left:96.9px;top:70.2px;font-size:18px;font-weight:normal;color:#f2f2f2;transform:scaleX(0.905);transform-origin:0 0;-webkit-text-stroke:0.25px currentColor;">281,5699</div>
<div class="t" style="left:174.9px;top:70.2px;font-size:18px;font-weight:normal;color:#f2f2f2;transform:scaleX(0.905);transform-origin:0 0;-webkit-text-stroke:0.25px currentColor;">52,2527</div>
<div class="t" style="left:252.5px;top:70.2px;font-size:18px;font-weight:normal;color:#f2f2f2;transform:scaleX(0.905);transform-origin:0 0;-webkit-text-stroke:0.25px currentColor;">208,9002</div>
<div class="t" style="left:330.0px;top:70.2px;font-size:18px;font-weight:normal;color:#f2f2f2;transform:scaleX(0.905);transform-origin:0 0;-webkit-text-stroke:0.25px currentColor;">18,8703</div>
<div class="t" style="left:407.9px;top:70.2px;font-size:18px;font-weight:normal;color:#f2f2f2;transform:scaleX(0.905);transform-origin:0 0;-webkit-text-stroke:0.25px currentColor;">226,7337</div>
<div class="t" style="left:485.9px;top:70.2px;font-size:18px;font-weight:normal;color:#f2f2f2;transform:scaleX(0.905);transform-origin:0 0;-webkit-text-stroke:0.25px currentColor;">71,0981</div>
<div class="t" style="left:563.6px;top:70.2px;font-size:18px;font-weight:normal;color:#f2f2f2;transform:scaleX(0.905);transform-origin:0 0;-webkit-text-stroke:0.25px currentColor;">262,4021</div>
<div class="b" style="left:0;top:93.1px;width:632.7px;height:31.05px;background:#7c7c7c;"></div>
<div class="t" style="left:12.3px;top:101.2px;font-size:18px;font-weight:bold;color:#f2f2f2;transform:scaleX(0.95);transform-origin:0 0;">Target Y</div>
<div class="t" style="left:96.9px;top:101.2px;font-size:18px;font-weight:normal;color:#f2f2f2;transform:scaleX(0.905);transform-origin:0 0;-webkit-text-stroke:0.25px currentColor;">269,6198</div>
<div class="t" style="left:174.9px;top:101.2px;font-size:18px;font-weight:normal;color:#f2f2f2;transform:scaleX(0.905);transform-origin:0 0;-webkit-text-stroke:0.25px currentColor;">57,3363</div>
<div class="t" style="left:252.5px;top:101.2px;font-size:18px;font-weight:normal;color:#f2f2f2;transform:scaleX(0.905);transform-origin:0 0;-webkit-text-stroke:0.25px currentColor;">192,8209</div>
<div class="t" style="left:330.0px;top:101.2px;font-size:18px;font-weight:normal;color:#f2f2f2;transform:scaleX(0.905);transform-origin:0 0;-webkit-text-stroke:0.25px currentColor;">19,4627</div>
<div class="t" style="left:407.9px;top:101.2px;font-size:18px;font-weight:normal;color:#f2f2f2;transform:scaleX(0.905);transform-origin:0 0;-webkit-text-stroke:0.25px currentColor;">212,2836</div>
<div class="t" style="left:485.9px;top:101.2px;font-size:18px;font-weight:normal;color:#f2f2f2;transform:scaleX(0.905);transform-origin:0 0;-webkit-text-stroke:0.25px currentColor;">76,7989</div>
<div class="t" style="left:563.6px;top:101.2px;font-size:18px;font-weight:normal;color:#f2f2f2;transform:scaleX(0.905);transform-origin:0 0;-webkit-text-stroke:0.25px currentColor;">250,1572</div>
<div class="b" style="left:0;top:124.2px;width:632.7px;height:31.05px;background:#3c3c3c;"></div>
<div class="t" style="left:12.3px;top:132.3px;font-size:18px;font-weight:bold;color:#f2f2f2;transform:scaleX(0.95);transform-origin:0 0;">ΔE 2000</div>
<div class="t" style="left:96.9px;top:132.3px;font-size:18px;font-weight:normal;color:#f2f2f2;transform:scaleX(0.905);transform-origin:0 0;-webkit-text-stroke:0.25px currentColor;">6,1992</div>
<div class="t" style="left:174.9px;top:132.3px;font-size:18px;font-weight:normal;color:#f2f2f2;transform:scaleX(0.905);transform-origin:0 0;-webkit-text-stroke:0.25px currentColor;">2,8370</div>
<div class="t" style="left:252.5px;top:132.3px;font-size:18px;font-weight:normal;color:#f2f2f2;transform:scaleX(0.905);transform-origin:0 0;-webkit-text-stroke:0.25px currentColor;">2,6787</div>
<div class="t" style="left:330.0px;top:132.3px;font-size:18px;font-weight:normal;color:#f2f2f2;transform:scaleX(0.905);transform-origin:0 0;-webkit-text-stroke:0.25px currentColor;">4,1959</div>
<div class="t" style="left:407.9px;top:132.3px;font-size:18px;font-weight:normal;color:#f2f2f2;transform:scaleX(0.905);transform-origin:0 0;-webkit-text-stroke:0.25px currentColor;">4,0779</div>
<div class="t" style="left:485.9px;top:132.3px;font-size:18px;font-weight:normal;color:#f2f2f2;transform:scaleX(0.905);transform-origin:0 0;-webkit-text-stroke:0.25px currentColor;">3,6187</div>
<div class="t" style="left:563.6px;top:132.3px;font-size:18px;font-weight:normal;color:#f2f2f2;transform:scaleX(0.905);transform-origin:0 0;-webkit-text-stroke:0.25px currentColor;">4,3061</div>
<div class="b" style="left:0;top:155.2px;width:632.7px;height:31.05px;background:#7c7c7c;"></div>
<div class="t" style="left:12.3px;top:163.3px;font-size:18px;font-weight:bold;color:#f2f2f2;transform:scaleX(0.9);transform-origin:0 0;">ΔE ITP</div>
<div class="t" style="left:96.9px;top:163.3px;font-size:18px;font-weight:normal;color:#f2f2f2;transform:scaleX(0.905);transform-origin:0 0;-webkit-text-stroke:0.25px currentColor;">10,2022</div>
<div class="t" style="left:174.9px;top:163.3px;font-size:18px;font-weight:normal;color:#f2f2f2;transform:scaleX(0.905);transform-origin:0 0;-webkit-text-stroke:0.25px currentColor;">15,4028</div>
<div class="t" style="left:252.5px;top:163.3px;font-size:18px;font-weight:normal;color:#f2f2f2;transform:scaleX(0.905);transform-origin:0 0;-webkit-text-stroke:0.25px currentColor;">11,8402</div>
<div class="t" style="left:330.0px;top:163.3px;font-size:18px;font-weight:normal;color:#f2f2f2;transform:scaleX(0.905);transform-origin:0 0;-webkit-text-stroke:0.25px currentColor;">14,1045</div>
<div class="t" style="left:407.9px;top:163.3px;font-size:18px;font-weight:normal;color:#f2f2f2;transform:scaleX(0.905);transform-origin:0 0;-webkit-text-stroke:0.25px currentColor;">7,4922</div>
<div class="t" style="left:485.9px;top:163.3px;font-size:18px;font-weight:normal;color:#f2f2f2;transform:scaleX(0.905);transform-origin:0 0;-webkit-text-stroke:0.25px currentColor;">17,1305</div>
<div class="t" style="left:563.6px;top:163.3px;font-size:18px;font-weight:normal;color:#f2f2f2;transform:scaleX(0.905);transform-origin:0 0;-webkit-text-stroke:0.25px currentColor;">13,0587</div>
</div>
<div class="b" style="left:1629.4px;top:696.7px;width:17.3px;height:169.9px;background:#3a3a3a;"></div>
<div class="b" style="left:1630.5px;top:698.0px;width:15.0px;height:16.6px;background:linear-gradient(#7a7a7a,#5a5a5a);border-radius:4px;"></div>
<svg class="b" style="left:1632px;top:701px" width="11" height="8"><path d="M0.5 7.5 L10.5 7.5 L5.5 1 Z" fill="#3a3a3a"/></svg>
<div class="b" style="left:1630.5px;top:719.0px;width:15.0px;height:104.8px;background:#2c2c2c;border-radius:7px;"></div>
<div class="b" style="left:1630.5px;top:849.3px;width:15.0px;height:15.9px;background:linear-gradient(#7a7a7a,#5a5a5a);border-radius:4px;"></div>
<svg class="b" style="left:1632px;top:853px" width="11" height="8"><path d="M0.5 0.5 L10.5 0.5 L5.5 7 Z" fill="#3a3a3a"/></svg>
<div class="b" style="left:996.7px;top:866.6px;width:650.0px;height:19.4px;background:#3a3a3a;"></div>
<div class="b" style="left:998.0px;top:868.0px;width:14.0px;height:16.0px;background:linear-gradient(#7a7a7a,#5a5a5a);border-radius:4px;"></div>
<svg class="b" style="left:1001px;top:871px" width="8" height="11"><path d="M7.5 0.5 L7.5 10.5 L1 5.5 Z" fill="#3a3a3a"/></svg>
<div class="b" style="left:1016.0px;top:869.0px;width:525.7px;height:15.0px;background:#2c2c2c;border-radius:7px;"></div>
<div class="b" style="left:1614.4px;top:868.0px;width:13.1px;height:16.0px;background:linear-gradient(#7a7a7a,#5a5a5a);border-radius:4px;"></div>
<svg class="b" style="left:1617px;top:871px" width="8" height="11"><path d="M0.5 0.5 L0.5 10.5 L7 5.5 Z" fill="#3a3a3a"/></svg>
<div class="b" style="left:1.4px;top:930.2px;width:155px;height:80px;border-radius:6px 6px 0 0;background:linear-gradient(#a6a6a6 0%,#9a9a9a 15%,#808080 60%,#606060 100%);box-shadow:inset 0 1px 0 #c0c0c0;"></div>
<div class="b" style="left:7.2px;top:936.5px;width:143px;height:45.5px;border-radius:5px;background:#bebebe;box-shadow:inset 0 0 0 1px rgba(0,0,0,0.18);"></div>
<div class="t" style="left:78.9px;top:989.4px;font-size:14px;font-weight:bold;color:#2e2e2e;transform:translateX(-50%) scaleX(0.97);transform-origin:50% 0;">White</div>
<div class="b" style="left:159.2px;top:930.2px;width:155px;height:80px;border-radius:6px 6px 0 0;background:linear-gradient(#a6a6a6 0%,#9a9a9a 15%,#808080 60%,#606060 100%);box-shadow:inset 0 1px 0 #c0c0c0;"></div>
<div class="b" style="left:165.0px;top:936.5px;width:143px;height:45.5px;border-radius:5px;background:#bf0000;box-shadow:inset 0 0 0 1px rgba(0,0,0,0.18);"></div>
<div class="t" style="left:236.7px;top:989.4px;font-size:14px;font-weight:bold;color:#2e2e2e;transform:translateX(-50%) scaleX(0.97);transform-origin:50% 0;">Red</div>
<div class="b" style="left:317.0px;top:930.2px;width:155px;height:80px;border-radius:6px 6px 0 0;background:linear-gradient(#a6a6a6 0%,#9a9a9a 15%,#808080 60%,#606060 100%);box-shadow:inset 0 1px 0 #c0c0c0;"></div>
<div class="b" style="left:322.8px;top:936.5px;width:143px;height:45.5px;border-radius:5px;background:#00bf00;box-shadow:inset 0 0 0 1px rgba(0,0,0,0.18);"></div>
<div class="t" style="left:394.5px;top:989.4px;font-size:14px;font-weight:bold;color:#2e2e2e;transform:translateX(-50%) scaleX(0.97);transform-origin:50% 0;">Green</div>
<div class="b" style="left:474.8px;top:930.2px;width:155px;height:80px;border-radius:6px 6px 0 0;background:linear-gradient(#a6a6a6 0%,#9a9a9a 15%,#808080 60%,#606060 100%);box-shadow:inset 0 1px 0 #c0c0c0;"></div>
<div class="b" style="left:480.6px;top:936.5px;width:143px;height:45.5px;border-radius:5px;background:#0000bf;box-shadow:inset 0 0 0 1px rgba(0,0,0,0.18);"></div>
<div class="t" style="left:552.3px;top:989.4px;font-size:14px;font-weight:bold;color:#2e2e2e;transform:translateX(-50%) scaleX(0.97);transform-origin:50% 0;">Blue</div>
<div class="b" style="left:632.6px;top:930.2px;width:155px;height:80px;border-radius:6px 6px 0 0;background:linear-gradient(#a6a6a6 0%,#9a9a9a 15%,#808080 60%,#606060 100%);box-shadow:inset 0 1px 0 #c0c0c0;"></div>
<div class="b" style="left:638.4px;top:936.5px;width:143px;height:45.5px;border-radius:5px;background:#00bfbf;box-shadow:inset 0 0 0 1px rgba(0,0,0,0.18);"></div>
<div class="t" style="left:710.1px;top:989.4px;font-size:14px;font-weight:bold;color:#2e2e2e;transform:translateX(-50%) scaleX(0.97);transform-origin:50% 0;">Cyan</div>
<div class="b" style="left:790.4px;top:930.2px;width:155px;height:80px;border-radius:6px 6px 0 0;background:linear-gradient(#a6a6a6 0%,#9a9a9a 15%,#808080 60%,#606060 100%);box-shadow:inset 0 1px 0 #c0c0c0;"></div>
<div class="b" style="left:796.2px;top:936.5px;width:143px;height:45.5px;border-radius:5px;background:#bf00bf;box-shadow:inset 0 0 0 1px rgba(0,0,0,0.18);"></div>
<div class="t" style="left:867.9px;top:989.4px;font-size:14px;font-weight:bold;color:#2e2e2e;transform:translateX(-50%) scaleX(0.97);transform-origin:50% 0;">Magenta</div>
<div class="b" style="left:948.2px;top:930.2px;width:155px;height:80px;border-radius:6px 6px 0 0;background:linear-gradient(#a6a6a6 0%,#9a9a9a 15%,#808080 60%,#606060 100%);box-shadow:inset 0 1px 0 #c0c0c0;"></div>
<div class="b" style="left:954.0px;top:936.5px;width:143px;height:45.5px;border-radius:5px;background:#c4c400;box-shadow:inset 0 0 0 1px rgba(0,0,0,0.18);"></div>
<div class="t" style="left:1025.7px;top:989.4px;font-size:14px;font-weight:bold;color:#2e2e2e;transform:translateX(-50%) scaleX(0.97);transform-origin:50% 0;">Yellow</div>
<div class="b" style="left:1107px;top:930.2px;width:155.4px;height:80px;border-radius:6px 6px 0 0;background:linear-gradient(#1c1c1c 0%,#202020 12%,#2c2c2c 60%,#303030 100%);"></div>
<div class="b" style="left:1113.7px;top:936.7px;width:142.6px;height:44.8px;border-radius:5px;background:#fff;box-shadow:inset 1.5px 1.5px 1px rgba(0,0,0,0.35);"></div>
<div class="t" style="left:1184.5px;top:989.4px;font-size:14px;font-weight:bold;color:#ffffff;transform:translateX(-50%) scaleX(0.97);transform-origin:50% 0;">100W</div>
<div class="b" style="left:1266px;top:930.4px;width:60.1px;height:80px;border-radius:6px 6px 0 0;background:linear-gradient(#a8a8a8,#6a6a6a);"></div>
<div class="b" style="left:1266px;top:930.4px;width:60.1px;height:23px;border-radius:6px 6px 0 0;background:linear-gradient(#b0b0b0,#8e8e8e);border-bottom:1.2px solid #3a3a3a;box-sizing:border-box;"></div>
<div class="b" style="left:1287.5px;top:933px;width:18px;height:18px;border-radius:50%;background:linear-gradient(#7a7a7a,#a0a0a0);"></div>
<svg class="b" style="left:1290.5px;top:937.5px" width="12" height="8"><path d="M0.5 7 L11.5 7 L6 0.5 Z" fill="#333"/></svg>
<div class="b" style="left:1276.8px;top:961px;width:38.6px;height:38.3px;box-sizing:border-box;border:2.6px solid #1e1e1e;border-radius:6px;background:linear-gradient(#bdbdbd 0%,#bdbdbd 50%,#9a9a9a 50%,#9a9a9a 100%);"></div>
<div class="b" style="left:1287.8px;top:972.1px;width:17.2px;height:16.8px;background:#000;"></div>
<div class="b" style="left:1327.4px;top:930.4px;width:282.6px;height:37.5px;background:linear-gradient(#b4b4b4,#6e6e6e);"></div>
<div class="b" style="left:1384.9px;top:930.4px;width:1.4px;height:37.5px;background:#2a2a2a;"></div>
<div class="b" style="left:1440.6px;top:930.4px;width:1.4px;height:37.5px;background:#2a2a2a;"></div>
<div class="b" style="left:1497.0px;top:930.4px;width:1.4px;height:37.5px;background:#2a2a2a;"></div>
<div class="b" style="left:1553.3px;top:930.4px;width:1.4px;height:37.5px;background:#2a2a2a;"></div>
<div class="b" style="left:1344.0px;top:936.5px;width:25px;height:25px;border-radius:50%;background:linear-gradient(#7e7e7e,#a6a6a6);"></div>
<div class="b" style="left:1401.1px;top:936.5px;width:25px;height:25px;border-radius:50%;background:linear-gradient(#7e7e7e,#a6a6a6);"></div>
<div class="b" style="left:1457.0px;top:936.5px;width:25px;height:25px;border-radius:50%;background:linear-gradient(#7e7e7e,#a6a6a6);"></div>
<div class="b" style="left:1513.5px;top:936.5px;width:25px;height:25px;border-radius:50%;background:linear-gradient(#7e7e7e,#a6a6a6);"></div>
<div class="b" style="left:1569.5px;top:936.5px;width:25px;height:25px;border-radius:50%;background:linear-gradient(#7e7e7e,#a6a6a6);"></div>
<div class="b" style="left:1351.7px;top:944.5px;width:9.6px;height:9.3px;background:#2e2e2e;"></div>
<svg class="b" style="left:1409px;top:942px" width="12" height="14"><path d="M1 0.5 L11 7 L1 13.5 Z" fill="#2e2e2e"/></svg>
<svg class="b" style="left:1459px;top:940px" width="22" height="18"><g fill="none" stroke="#2e2e2e" stroke-width="2"><path d="M5 2 L2.5 2 L2.5 16 L5 16 M17 2 L19.5 2 L19.5 16 L17 16"/></g><g fill="#2e2e2e"><circle cx="8" cy="9" r="1.2"/><circle cx="11" cy="9" r="1.2"/><circle cx="14" cy="9" r="1.2"/></g></svg>
<svg class="b" style="left:1515px;top:942px" width="22" height="14"><path d="M11 7 C8 2.5 3 2.5 3 7 C3 11.5 8 11.5 11 7 C14 2.5 19 2.5 19 7 C19 11.5 14 11.5 11 7 Z" fill="none" stroke="#2e2e2e" stroke-width="2.4"/></svg>
<svg class="b" style="left:1573px;top:940px" width="18" height="18"><g fill="none" stroke="#2e2e2e" stroke-width="2.4"><path d="M14.5 6 A6.5 6.5 0 0 0 3 7"/><path d="M3.5 12 A6.5 6.5 0 0 0 15 11"/></g><path d="M16.5 2 L16.5 8 L10.5 8 Z M1.5 16 L1.5 10 L7.5 10 Z" fill="#2e2e2e"/></svg>
<div class="b" style="left:1327.4px;top:969.1px;width:170.3px;height:40px;border-radius:4px 0 0 0;background:linear-gradient(#b8b8b8,#767676);"></div>
<div class="b" style="left:1498.4px;top:969.1px;width:175px;height:40px;background:linear-gradient(#b8b8b8,#767676);"></div>
<div class="b" style="left:1497.0px;top:969.1px;width:1.4px;height:37.9px;background:#2a2a2a;"></div>
<div class="b" style="left:1353.1px;top:975px;width:25px;height:25px;border-radius:50%;background:linear-gradient(#8a8a8a,#b0b0b0);"></div>
<div class="b" style="left:1620.5px;top:975px;width:25px;height:25px;border-radius:50%;background:linear-gradient(#8a8a8a,#b0b0b0);"></div>
<div class="t" style="left:1365.6px;top:973.9px;font-size:26px;font-weight:normal;color:#3a3a3a;transform:translateX(-50%) scaleX(0.9);transform-origin:50% 0;-webkit-text-stroke:0.25px currentColor;">«</div>
<div class="t" style="left:1633.0px;top:973.9px;font-size:26px;font-weight:normal;color:#3a3a3a;transform:translateX(-50%) scaleX(0.9);transform-origin:50% 0;-webkit-text-stroke:0.25px currentColor;">»</div>
<div class="t" style="left:1399.5px;top:973.8px;font-size:27.9px;font-weight:normal;color:#383838;-webkit-text-stroke:1.1px #383838;">Back</div>
<div class="t" style="left:1533.5px;top:973.8px;font-size:27.9px;font-weight:normal;color:#383838;transform:scaleX(1.09);transform-origin:0 0;-webkit-text-stroke:1.1px #383838;">Next</div>
<svg class="b" style="left:1617.5px;top:927.4px" width="40" height="40" viewBox="-20 -20 40 40"><g stroke="#1a1a1a" stroke-opacity="0.75" stroke-width="8.6" stroke-linecap="round" transform="translate(0.9,0.9)"><line x1="0" y1="-13.3" x2="0" y2="13.3"/><line x1="-11.5" y1="-6.65" x2="11.5" y2="6.65"/><line x1="-11.5" y1="6.65" x2="11.5" y2="-6.65"/></g><g stroke="#e00a0a" stroke-width="7.2" stroke-linecap="round"><line x1="0" y1="-13.3" x2="0" y2="13.3"/><line x1="-11.5" y1="-6.65" x2="11.5" y2="6.65"/><line x1="-11.5" y1="6.65" x2="11.5" y2="-6.65"/></g></svg>
</div>
<script>
(function(){
var cv=document.getElementById('cie'); if(!cv||!cv.getContext) return;
var ctx=cv.getContext('2d'); var W=cv.width,H=cv.height;
var OX=-0.200000, OY=490.800000, UX=1063.500000, VY=818.200000, DARK=0.600000, GAM=1.000000, MODE=0;
var L=[[.1741,.005],[.1740,.005],[.1738,.0049],[.1736,.0049],[.1733,.0048],[.1730,.0048],[.1726,.0048],[.1721,.0048],[.1714,.0051],[.1703,.0058],[.1689,.0069],[.1669,.0086],[.1644,.0109],[.1611,.0138],[.1566,.0177],[.1510,.0227],[.1440,.0297],[.1355,.0399],[.1241,.0578],[.1096,.0868],[.0913,.1327],[.0687,.2007],[.0454,.2950],[.0235,.4127],[.0082,.5384],[.0039,.6548],[.0139,.7502],[.0389,.8120],[.0743,.8338],[.1142,.8262],[.1547,.8059],[.1929,.7816],[.2296,.7543],[.2658,.7243],[.3016,.6923],[.3373,.6589],[.3731,.6245],[.4087,.5896],[.4441,.5547],[.4788,.5202],[.5125,.4866],[.5448,.4544],[.5752,.4242],[.6029,.3965],[.6270,.3725],[.6482,.3514],[.6658,.3340],[.6801,.3197],[.6915,.3083],[.7006,.2993],[.7079,.2920],[.7140,.2859],[.7190,.2809],[.7230,.2770],[.7260,.2740],[.7283,.2717],[.7300,.2700],[.7311,.2689],[.7320,.2680],[.7327,.2673],[.7334,.2666],[.7340,.2660],[.7344,.2656],[.7346,.2654],[.7347,.2653]];
var SS=2, W2=W*SS, H2=H*SS;
var img=ctx.createImageData(W2,H2); var d=img.data;
for(var j=0;j<H2;j++){ var v=(OY-(j+0.5)/SS)/VY;
 for(var i=0;i<W2;i++){ var u=((i+0.5)/SS-OX)/UX;
  var den=6*u-16*v+12; var x=9*u/den, y=4*v/den; if(y<=0.0005) y=0.0005;
  var X=x/y, Z=(1-x-y)/y;
  var r=3.2406*X-1.5372-0.4986*Z, g=-0.9689*X+1.8758+0.0415*Z, b=0.0557*X-0.2040+1.0570*Z;
  var m=Math.min(r,g,b), k=1;
  if(m<0){ if(MODE==1){r-=m; g-=m; b-=m;} else {r=Math.max(r,0); g=Math.max(g,0); b=Math.max(b,0);} k=DARK; }
  var mx=Math.max(r,g,b); r/=mx; g/=mx; b/=mx;
  if(GAM!=1){ r=Math.pow(r,GAM); g=Math.pow(g,GAM); b=Math.pow(b,GAM); }
  var p=(j*W2+i)*4; d[p]=r*255*k; d[p+1]=g*255*k; d[p+2]=b*255*k; d[p+3]=255;
 }}
var off=document.createElement('canvas'); off.width=W2; off.height=H2; off.getContext('2d').putImageData(img,0,0);
var P=[]; for(var n=0;n<L.length;n++){ var xx=L[n][0], yy=L[n][1]; var dd=-2*xx+12*yy+3; P.push([OX+4*xx/dd*UX, OY-9*yy/dd*VY]); }
ctx.beginPath(); ctx.moveTo(P[0][0],P[0][1]);
for(var n=0;n<P.length-1;n++){ var p0=P[Math.max(n-1,0)], p1=P[n], p2=P[n+1], p3=P[Math.min(n+2,P.length-1)];
  ctx.bezierCurveTo(p1[0]+(p2[0]-p0[0])/6, p1[1]+(p2[1]-p0[1])/6, p2[0]-(p3[0]-p1[0])/6, p2[1]-(p3[1]-p1[1])/6, p2[0], p2[1]); }
ctx.closePath(); ctx.save(); ctx.clip(); ctx.imageSmoothingEnabled=true; ctx.imageSmoothingQuality='high'; ctx.drawImage(off,0,0,W2,H2,0,0,W,H); ctx.restore(); var fb=document.getElementById('ciefb'); if(fb) fb.style.display='none';
})();
</script>
</body></html>
